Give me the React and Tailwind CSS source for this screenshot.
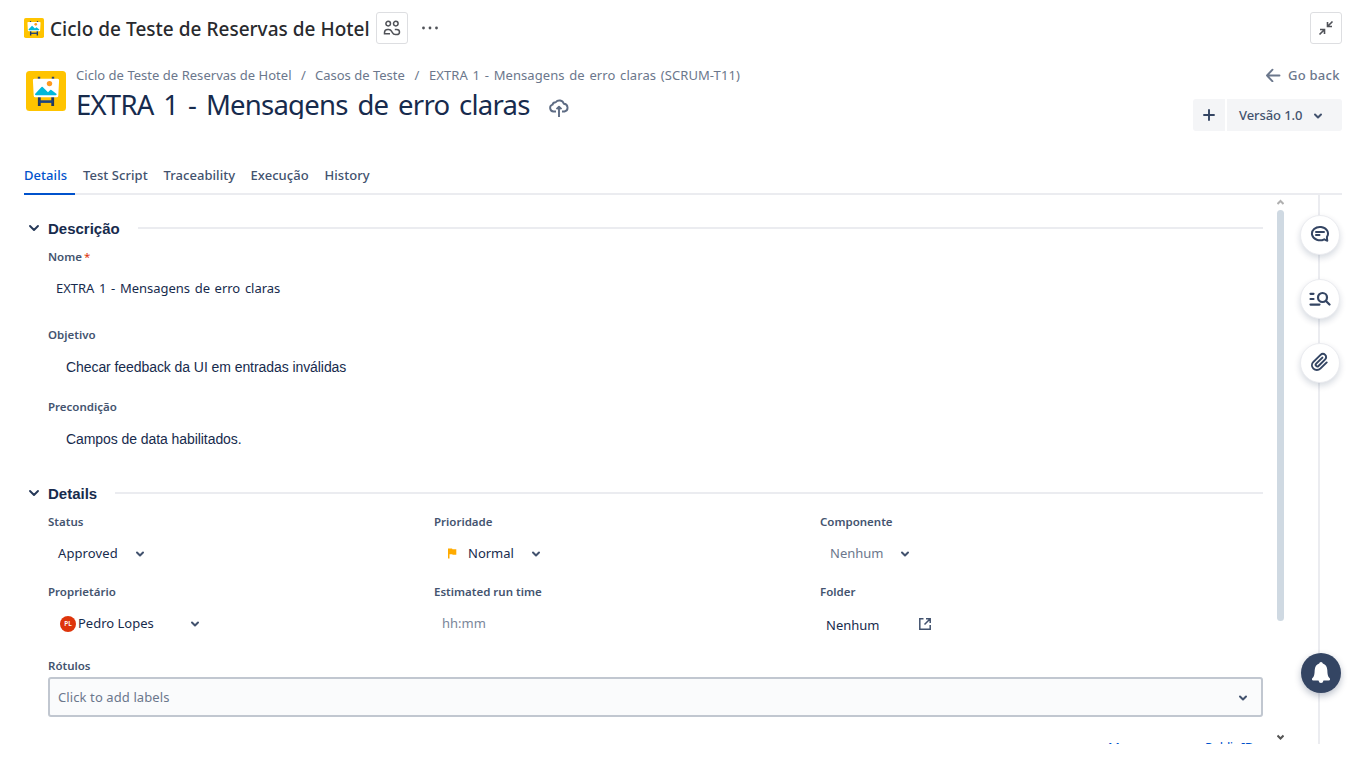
import React from "react";

const Chevron = ({ className = "" }) => (
  <svg className={"shrink-0 " + className} width="10" height="8" viewBox="0 0 10 8" fill="none" stroke="#42526e" strokeWidth="2" strokeLinecap="round" strokeLinejoin="round">
    <path d="M2 2.500 5 5.500 8 2.500" />
  </svg>
);

const Logo = ({ className }) => (
  <svg className={"shrink-0 " + className} viewBox="0 0 40 40">
    <rect width="40" height="40" rx="3.500" fill="#ffc400" />
    <path d="M13 5.800v5M27 5.800v5" stroke="#344563" strokeWidth="2.400" />
    <path d="M13.300 26v9M26.700 26v9" stroke="#253858" strokeWidth="2.800" />
    <path d="M13 30.600h14" stroke="#1d4480" strokeWidth="2.600" />
    <path d="M8.300 7.800h23.400q1.500 0 1.400 1.500l-.8 15.500q-.1 1.500-1.600 1.500H9.300q-1.500 0-1.600-1.500L6.900 9.300q-.1-1.500 1.400-1.500z" fill="#fff" />
    <path d="M9 23 15.500 16q.6-.6 1.200 0l5.300 5.200 2.200-2.200q.6-.6 1.200 0l5.300 4q-.2 1.300-1 1.300H10q-1 0-1-1.300z" fill="#00b8d9" />
    <circle cx="23.500" cy="12.600" r="2.700" fill="#ff991f" />
  </svg>
);

const Label = ({ children }) => (
  <div className="h-4 text-[11.5px] leading-4 font-semibold text-[#44546f]">{children}</div>
);

const SectionHead = ({ children }) => (
  <div className="flex h-5 items-center">
    <svg className="shrink-0" width="12" height="10" viewBox="0 0 12 10" fill="none" stroke="#253858" strokeWidth="1.900" strokeLinecap="round" strokeLinejoin="round">
      <path d="M2 3 6 7 10 3" />
    </svg>
    <h2 className="ml-2 shrink-0 pt-0.5 text-[15px] leading-5 font-bold text-[#172b4d] font-['Liberation_Sans',sans-serif]">{children}</h2>
    <div className="ml-[18px] h-0.5 flex-1 bg-[#ebecf0]" />
  </div>
);

const RailButton = ({ children }) => (
  <button className="flex size-10 items-center justify-center rounded-full border border-[#ebecf0] bg-white shadow-[0_3px_6px_rgba(9,30,66,0.16)]">{children}</button>
);

function Header() {
  return (
    <div className="flex h-14 items-center pr-[23px] pl-6">
      <Logo className="size-5" />
      <h1 className="ml-1.5 w-[320px] pt-0.5 text-[19px] tracking-[0.02px] font-medium whitespace-nowrap text-[#292a2e]">Ciclo de Teste de Reservas de Hotel</h1>
      <button className="ml-1.5 flex size-8 items-center justify-center rounded-[3px] border border-[#dddee1]">
        <svg width="18" height="16" viewBox="0 0 18 16" fill="none" stroke="#505258" strokeWidth="1.500">
          <circle cx="5.200" cy="3.600" r="2.300" />
          <circle cx="12.800" cy="3.600" r="2.300" />
          <path d="M1.500 14.600v-2q0-3.200 3.200-3.200h1q2 0 3 2l.7 1.200q1 2 3 2h1.200q2.900 0 2.900-2.600 0-2.600-2.900-2.600h-1.800M1.500 13.800h5.500" />
        </svg>
      </button>
      <svg className="ml-3" width="20" height="6" viewBox="0 0 20 6" fill="#505258">
        <circle cx="3.500" cy="3" r="1.400" /><circle cx="10" cy="3" r="1.400" /><circle cx="16.500" cy="3" r="1.400" />
      </svg>
      <button className="ml-auto flex size-8 items-center justify-center rounded-[3px] border border-[#dddee1]">
        <svg width="16" height="16" viewBox="0 0 16 16" fill="none" stroke="#505258" strokeWidth="1.600">
          <path d="M14.500 1.500 10 6M9.500 2v4.500H14M1.500 14.500 6 10M2 9.500h4.500V14" />
        </svg>
      </button>
    </div>
  );
}

function TitleArea() {
  return (
    <div className="flex h-[101px] pr-[23px] pl-[26px]">
      <Logo className="mt-[15px] size-10" />
      <div className="ml-2.5 flex-1">
        <div className="mt-2.5 flex h-5 items-center text-[13px] whitespace-nowrap text-[#6b778c]">
          <span className="w-[216px] tracking-[0.03px]">Ciclo de Teste de Reservas de Hotel</span>
          <span className="w-[23px] text-center">/</span>
          <span className="w-[90px]">Casos de Teste</span>
          <span className="w-6 text-center">/</span>
          <span className="tracking-[0.08px] [word-spacing:1.2px]">EXTRA 1 - Mensagens de erro claras (SCRUM-T11)</span>
        </div>
        <div className="flex h-[33px] items-center">
          <div className="h-[33px] w-[473px] overflow-hidden text-[27.500px] leading-[38px] tracking-[-0.77px] whitespace-nowrap text-[#172b4d] [word-spacing:3.4px]">EXTRA 1 - Mensagens de erro claras</div>
          <svg className="mt-2.5" width="20" height="20" viewBox="0 0 20 20" fill="none" stroke="#5e6c84" strokeWidth="1.900" strokeLinejoin="round">
            <path d="M7 13.500H4.500A3.500 3.500 0 0 1 3.500 6.700 3.200 3.200 0 0 1 6.700 4.300 4.600 4.600 0 0 1 14.800 5.800 3.900 3.900 0 0 1 15.500 13.500H13" />
            <path d="M10 19V9M7.500 11.200 10 8.700l2.500 2.500" />
          </svg>
        </div>
      </div>
      <div className="flex flex-col items-end">
        <div className="mt-2.5 flex h-5 items-center gap-[7px] pr-0.5 text-[13px] font-medium text-[#6b778c]">
          <svg className="mb-0.5" width="16" height="14" viewBox="0 0 16 14" fill="none" stroke="#6b778c" strokeWidth="1.900" strokeLinecap="round" strokeLinejoin="round">
            <path d="M14.500 7.500H2M7.500 1.700 2 7.500 7.500 13.300" />
          </svg>
          <span className="w-[52px] tracking-[0.25px] whitespace-nowrap">Go back</span>
        </div>
        <div className="mt-[13px] flex h-8 gap-0.5">
          <button className="flex w-8 items-center justify-center rounded-l-[3px] bg-[#f4f5f7]">
            <svg width="12" height="12" viewBox="0 0 12 12" stroke="#344563" strokeWidth="1.900" strokeLinecap="round"><path d="M6 1v10M1 6h10" /></svg>
          </button>
          <button className="flex w-[115px] items-center rounded-r-[3px] bg-[#f4f5f7] pl-3 text-[13px] font-medium text-[#42526e]">
            <span className="w-[74px] pt-px text-left tracking-[-0.08px] whitespace-nowrap">Versão 1.0</span>
            <Chevron className="mt-px" />
          </button>
        </div>
      </div>
    </div>
  );
}

function Tabs() {
  return (
    <div className="mr-[23px] ml-6 flex h-[38px] border-b-2 border-[#ebecf0] text-[13px] leading-9 font-medium tracking-[0.05px] whitespace-nowrap text-[#42526e]">
      <div className="mb-[-2px] w-[51px] border-b-2 border-[#0052cc] text-[#0052cc]">Details</div>
      <div className="ml-2 w-[80.5px]">Test Script</div>
      <div className="w-[87px]">Traceability</div>
      <div className="w-[74px]">Execução</div>
      <div>History</div>
    </div>
  );
}

function Form() {
  return (
    <div className="ml-7 h-[549px] w-[1235px] overflow-hidden pt-[23px] text-[13px] text-[#172b4d]">
      <SectionHead>Descrição</SectionHead>
      <div className="ml-5 pt-[11px]">
        <Label>Nome<span className="ml-0.5 font-normal text-[#de350b]">*</span></Label>
        <div className="mt-[13px] ml-2 h-5 leading-5 tracking-[-0.02px] [word-spacing:1.3px]">EXTRA 1 - Mensagens de erro claras</div>
        <div className="h-[29px]" />
        <Label>Objetivo</Label>
        <div className="mt-3.5 ml-[18px] h-5 text-[14px] leading-5 tracking-[-0.07px] font-['Liberation_Sans',sans-serif]">Checar feedback da UI em entradas inválidas</div>
        <div className="h-[22px]" />
        <Label>Precondição</Label>
        <div className="mt-3.5 ml-[18px] h-5 text-[14px] leading-5 tracking-[-0.07px] font-['Liberation_Sans',sans-serif]">Campos de data habilitados.</div>
      </div>
      <div className="h-[34px]" />
      <SectionHead>Details</SectionHead>
      <div className="ml-5 grid grid-cols-[386px_386px_1fr] pt-[11px]">
        <div className="h-[70px]">
          <Label>Status</Label>
          <div className="mt-3.5 flex h-5 items-center pl-2.5"><span className="w-[77px] tracking-[0.1px]">Approved</span><Chevron /></div>
        </div>
        <div>
          <Label>Prioridade</Label>
          <div className="mt-3.5 flex h-5 items-center pl-3.5">
            <svg className="mb-0.5" width="9" height="11" viewBox="0 0 9 11" fill="#ffab00"><path d="M0 .500H4L4.500 1.300H8.300V6.700H4.700L4.200 6.200H1.500V10.500H0z" /></svg>
            <span className="ml-[11px] w-[63px]">Normal</span><Chevron />
          </div>
        </div>
        <div>
          <Label>Componente</Label>
          <div className="mt-3.5 flex h-5 items-center pl-2.5"><span className="w-[70px] text-[#6b778c]">Nenhum</span><Chevron /></div>
        </div>
        <div className="h-[74px]">
          <Label>Proprietário</Label>
          <div className="mt-3.5 flex h-5 items-center pl-3">
            <span className="flex size-4 items-center justify-center rounded-full bg-[#de350b] text-[6.5px] font-semibold text-white">PL</span>
            <span className="ml-0.5 w-[112px]">Pedro Lopes</span><Chevron />
          </div>
        </div>
        <div>
          <Label>Estimated run time</Label>
          <div className="mt-[13px] h-5 pl-2 leading-5 text-[#7a869a]">hh:mm</div>
        </div>
        <div>
          <Label>Folder</Label>
          <div className="mt-4 flex h-5 items-center pl-1.5">
            <span className="w-[93px]">Nenhum</span>
            <svg className="-mt-1" width="12" height="12" viewBox="0 0 12 12" fill="none" stroke="#42526e" strokeWidth="1.500"><path d="M4.500.8H.8v10.400h10.400V7M7 .8h4.200V5M11 1 5.500 6.500" /></svg>
          </div>
        </div>
      </div>
      <div className="ml-5">
        <Label>Rótulos</Label>
        <div className="mt-[3px] flex h-10 items-center rounded-[3px] border-2 border-[#c1c7d0] bg-[#fafbfc] pr-[13px] pl-2 text-[#6b778c]">
          <span className="flex-1 pt-px tracking-[0.1px]">Click to add labels</span><Chevron className="mt-px" />
        </div>
        <div className="mt-5 flex pl-[1060px] leading-5 whitespace-nowrap text-[#0052cc]">
          <span className="w-[97px]">M</span><span className="tracking-[-0.6px]">Public ID</span>
        </div>
      </div>
    </div>
  );
}

function Scrollbar() {
  return (
    <div className="ml-3.5 flex h-[549px] w-[7px] flex-col items-center">
      <svg className="mt-[3px] shrink-0" width="7" height="8" viewBox="0 0 7 8" fill="none" stroke="#b0b0b0" strokeWidth="2"><path d="M.5 6 3.500 3 6.500 6" /></svg>
      <div className="mt-1 h-[411px] w-[7px] shrink-0 rounded-full bg-[#cfd9e2]" />
      <svg className="mt-auto mb-[3px] shrink-0" width="7" height="8" viewBox="0 0 7 8" fill="none" stroke="#555" strokeWidth="2"><path d="M.5 2.500 3.500 5.500 6.500 2.500" /></svg>
    </div>
  );
}

function Rail() {
  return (
    <div className="ml-4 grid h-[549px] w-10 justify-items-center">
      <div className="col-start-1 row-start-1 mr-[3px] w-0.5 bg-[#ebecf0]" />
      <div className="col-start-1 row-start-1 flex flex-col gap-6 pt-5">
        <RailButton>
          <svg className="mb-0.5" width="20" height="20" viewBox="0 0 20 20" fill="none" stroke="#344563" strokeWidth="2" strokeLinecap="round" strokeLinejoin="round">
            <path d="M14.200 15.300A8 6.700 0 1 1 17 12.800Q16.800 14.500 17.300 16.700Q15.700 16.500 14.200 15.300z" /><path d="M6 8h8M6 11h3.500" />
          </svg>
        </RailButton>
        <RailButton>
          <svg width="22" height="16" viewBox="0 0 22 16" fill="none" stroke="#344563" strokeWidth="2.200" strokeLinecap="round">
            <path d="M1.500 2.800h3M1.500 8h3M1.500 13.600h9" /><circle cx="13.500" cy="6.500" r="4.500" /><path d="m17 10 3.500 3.500" />
          </svg>
        </RailButton>
        <RailButton>
          <svg className="mb-0.5" width="24" height="24" viewBox="0 0 24 24" fill="#344563">
            <path d="M11.643 17.965c-1.530 1.495-4.016 1.496-5.542.004a3.773 3.773 0 0 1 .002-5.412l7.147-6.985a2.316 2.316 0 0 1 3.233-.003c.893.873.895 2.282.004 3.153l-6.703 6.550a.653.653 0 0 1-.914-.008.620.620 0 0 1 0-.902l6.229-6.087a.941.941 0 0 0 0-1.353.995.995 0 0 0-1.384 0l-6.230 6.087a2.502 2.502 0 0 0 0 3.607 2.643 2.643 0 0 0 3.683.009l6.703-6.550a4.074 4.074 0 0 0-.003-5.859 4.306 4.306 0 0 0-6.002.003l-7.148 6.985a5.655 5.655 0 0 0-.001 8.118 5.900 5.900 0 0 0 8.310-.002l6.383-6.238a.941.941 0 0 0 0-1.353.995.995 0 0 0-1.384 0z" />
          </svg>
        </RailButton>
        <button className="mt-[246px] ml-px flex size-10 items-center justify-center rounded-full bg-[#344563] shadow-[0_3px_7px_rgba(9,30,66,0.28)]">
          <svg width="20" height="22" viewBox="0 0 20 22" fill="#fff"><path d="M10 0q1.600 0 1.800 1.600Q16 3 16.300 8q.2 6 1.500 7.200 1.700 1.300 1.200 2.600-.2.700-1.200.7H12.500Q12 21 10 21T7.500 18.500H2.200q-1 0-1.200-.7-.5-1.300 1.200-2.600Q3.500 14 3.700 8 4 3 8.200 1.600 8.400 0 10 0z" /></svg>
        </button>
      </div>
    </div>
  );
}

export default function App() {
  return (
    <div className="h-[766px] w-[1365px] overflow-hidden bg-white font-['Noto_Sans','Open_Sans',sans-serif]">
      <Header />
      <TitleArea />
      <Tabs />
      <div className="flex">
        <Form />
        <Scrollbar />
        <Rail />
      </div>
    </div>
  );
}
